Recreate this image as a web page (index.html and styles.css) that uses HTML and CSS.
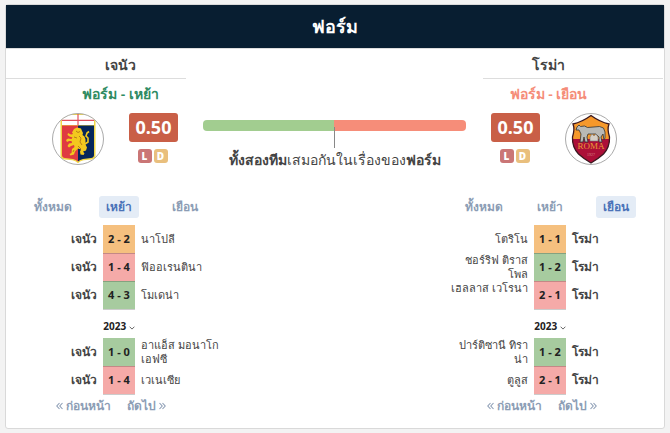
FILE: index.html
```html
<!doctype html>
<html lang="th">
  <head>
    <meta charset="utf-8">
    <title>ฟอร์ม</title>
    <link rel="stylesheet" href="styles.css">
  </head>
  <body>
	<svg class="defs" aria-hidden="true">
		<symbol id="chevron" viewBox="0 0 6 4"><path d="M.6 .7 3 3.1 5.4 .7" fill="none" stroke="currentColor"/></symbol>
		<symbol id="prev" viewBox="0 0 7 8"><path d="M3.5 1 .8 4l2.7 3M6.5 1 3.8 4l2.7 3" fill="none" stroke="currentColor" stroke-width="1.1"/></symbol>
		<symbol id="next" viewBox="0 0 7 8"><path d="M.5 1l2.7 3L.5 7M3.5 1l2.7 3-2.7 3" fill="none" stroke="currentColor" stroke-width="1.1"/></symbol>
	</svg>
	<main class="card">
		<h1>ฟอร์ม</h1>
		<section class="summary">
			<div class="team home">
				<h2>เจนัว</h2>
				<h3>ฟอร์ม - เหย้า</h3>
				<div class="rating">
					<svg class="crest" viewBox="0 0 52 52" role="img" aria-label="เจนัว">
						<clipPath id="round"><circle cx="26" cy="26" r="25.5"/></clipPath>
						<circle cx="26" cy="26" r="25.5" fill="#fff"/>
						<g clip-path="url(#round)">
							<path d="M8.500 0h35v43q0 3-4 3.500l-8 .8q-3 .5-5.500 3-2.500-2.500-5.500-3l-8-.8q-4-.5-4-3.500z" fill="#f0d647"/>
							<path d="M10 2h32v10H10z" fill="#fff"/>
							<path d="M10 6.800h32v1.200H10zM25.400 1h1.200v11h-1.200z" fill="#e2505c"/>
							<path d="M10 12.500h16v36q-2-2-5-2.500l-8-1q-3-.4-3-3z" fill="#df3a41"/>
							<path d="M26 12.500h16V42q0 2.600-3 3l-8 1q-3 .5-5 2.500z" fill="#06265a"/>
							<path d="M22 16l3-1.500 4 1 1 2.500 1 2-.5 2 2 1.500 1 3 0 5 1.500 3-1 3-3 1 1.500 2-1 1.500-3-.5-.5-3 1-2-3-1-3 3-1 3-3.500 1-1-1.500 2-1 .5-4 2.500-2-.5-2-3 1-2 1.500-1.500-1.500 1.500-2.500 3-.5-.5-2-2.500 0-2 1-1-2 2-1.500 3.500 .5 1-1.500-3-1-2-1.500 .5-2 3 1.500 2-.5-1-1.500z" fill="#f3c91e"/>
							<path d="M33 31l3-2 0-4-2-2 1-3 2-1.500" fill="none" stroke="#f3c91e" stroke-width="1.600"/>
							<path d="M24 18l2 1.500 2-1M27 23l2 2-1 4 2 3M22 24l3 1M26 33l3 3M22 37l-1 2" fill="none" stroke="#a86b18" stroke-width=".8"/>
						</g>
						<circle cx="26" cy="26" r="25.500" fill="none" stroke="#aaa"/>
					</svg>
					<div class="points">
						<strong>0.50</strong>
						<div class="results"><span class="lost">L</span><span class="drawn">D</span></div>
					</div>
				</div>
			</div>
			<div class="compare">
				<div class="bar"></div>
				<p><b>ทั้งสองทีม</b>เสมอกันในเรื่องของ<b>ฟอร์ม</b></p>
			</div>
			<div class="team away">
				<h2>โรม่า</h2>
				<h3>ฟอร์ม - เยือน</h3>
				<div class="rating">
					<div class="points">
						<strong>0.50</strong>
						<div class="results"><span class="lost">L</span><span class="drawn">D</span></div>
					</div>
					<svg class="crest" viewBox="0 0 52 52" role="img" aria-label="โรม่า">
						<circle cx="26" cy="26" r="25.500" fill="#fff" stroke="#aaa"/>
						<clipPath id="shield"><path d="M26 2.500q9 6.500 18 8.500-2 5 .5 13 .5 10-6 17Q33 46 26 50q-7-4-12.500-9-6.500-7-6-17Q10 16 8 11q9-2 18-8.500z"/></clipPath>
						<g clip-path="url(#shield)">
							<path d="M0 0h52v27H0z" fill="#f6982b"/>
							<path d="M0 26h52v26H0z" fill="#ac0f38"/>
						</g>
						<path d="M26 2.500q9 6.500 18 8.500-2 5 .5 13 .5 10-6 17Q33 46 26 50q-7-4-12.500-9-6.500-7-6-17Q10 16 8 11q9-2 18-8.500z" fill="none" stroke="#3b1820" stroke-width="1.300"/>
						<path d="M12 14l2-2 1.500 1.500 4-.5 3 1.500 12-1 4 1.500 1.500 4 0 6-1 2-1-6-2 3 1 5-3 0 0-5-3-3-8 0-1 3 1 5-3 0-1-5-1 5-3 0 1-8-2-4-3 0z" fill="#b9b9b6" stroke="#333" stroke-width=".8"/>
						<path d="M25 28l0-4 2-3 2 2 2-2 2 3 0 4z" fill="#d5cfc6" stroke="#777" stroke-width=".6"/>
						<text x="26" y="36" class="crest-name">ROMA</text>
						<text x="26" y="43" class="crest-year">1927</text>
					</svg>
				</div>
			</div>
		</section>
		<section class="history">
			<div class="matches">
				<nav class="tabs">
					<button type="button">ทั้งหมด</button>
					<button type="button" class="active">เหย้า</button>
					<button type="button">เยือน</button>
				</nav>
				<table>
					<tbody>
						<tr><td class="own">เจนัว</td><td class="score draw">2 - 2</td><td>นาโปลี</td></tr>
						<tr><td class="own">เจนัว</td><td class="score loss">1 - 4</td><td>ฟิออเรนตินา</td></tr>
						<tr><td class="own">เจนัว</td><td class="score win">4 - 3</td><td>โมเดน่า</td></tr>
					</tbody>
					<tbody>
						<tr><th colspan="3"><button type="button" class="season">2023 <svg class="chevron"><use href="#chevron"/></svg></button></th></tr>
						<tr><td class="own">เจนัว</td><td class="score win">1 - 0</td><td>อาแอ็ส มอนาโก เอฟซี</td></tr>
						<tr><td class="own">เจนัว</td><td class="score loss">1 - 4</td><td>เวเนเซีย</td></tr>
					</tbody>
				</table>
				<nav class="pager">
					<a href="#"><svg class="arrow"><use href="#prev"/></svg> ก่อนหน้า</a>
					<a href="#">ถัดไป <svg class="arrow"><use href="#next"/></svg></a>
				</nav>
			</div>
			<div class="matches">
				<nav class="tabs">
					<button type="button">ทั้งหมด</button>
					<button type="button">เหย้า</button>
					<button type="button" class="active">เยือน</button>
				</nav>
				<table>
					<tbody>
						<tr><td>โตริโน</td><td class="score draw">1 - 1</td><td class="own">โรม่า</td></tr>
						<tr><td>ชอร์ริฟ ติราส<wbr>โพล</td><td class="score win">1 - 2</td><td class="own">โรม่า</td></tr>
						<tr><td class="top">เฮลลาส เวโรนา</td><td class="score loss">2 - 1</td><td class="own">โรม่า</td></tr>
					</tbody>
					<tbody>
						<tr><th colspan="3"><button type="button" class="season">2023 <svg class="chevron"><use href="#chevron"/></svg></button></th></tr>
						<tr><td>ปาร์ติซานี ทิรา<wbr>น่า</td><td class="score win">1 - 2</td><td class="own">โรม่า</td></tr>
						<tr><td>ตูลูส</td><td class="score loss">2 - 1</td><td class="own">โรม่า</td></tr>
					</tbody>
				</table>
				<nav class="pager">
					<a href="#"><svg class="arrow"><use href="#prev"/></svg> ก่อนหน้า</a>
					<a href="#">ถัดไป <svg class="arrow"><use href="#next"/></svg></a>
				</nav>
			</div>
		</section>
	</main>
  </body>
</html>
```
FILE: styles.css
```css
* { box-sizing: border-box; }

body
{
	margin: 4px 5px;
	background: #f3f3f3;
	color: #444;
	font-family: "Noto Sans", "Open Sans", sans-serif;
	font-size: 12px;
}

h1, h2, h3, p { margin: 0; }

button
{
	border: 0;
	padding: 0;
	background: none;
	font-family: inherit;
	cursor: pointer;
}

.defs { display: none; }

.card
{
	background: #fff;
	border: 1px solid #d9d9d9;
	border-radius: 3px;
	padding-bottom: 11px;
}

h1
{
	background: #081e31;
	border-bottom: 1px solid #ddd;
	color: #fff;
	font-size: 18px;
	line-height: 43px;
	text-align: center;
}

/* team ratings and comparison bar */
.summary
{
	display: grid;
	grid-template-columns: 180px 1fr 180px;
	padding-right: 1px;
}

h2
{
	border-bottom: 1px solid #ddd;
	padding-top: 3px;
	font-size: 14px;
	font-weight: 600;
	line-height: 26px;
}

h3
{
	padding-bottom: 3px;
	font-size: 14px;
	font-weight: 600;
	line-height: 29px;
}

.team { text-align: center; }
.home h2, .home h3 { padding-left: 49px; }
.away h2, .away h3 { padding-right: 49px; }
.home h3 { color: #2e8b62; }
.away h3 { color: #f58d79; }

.rating
{
	display: flex;
	gap: 25px;
	padding-top: 2px;
}

.home .rating { padding-left: 46px; }
.away .rating { padding-left: 8px; }

.crest
{
	width: 52px;
	height: 52px;
}

.crest-name
{
	fill: #e99a35;
	font: 9px "Liberation Serif", serif;
	text-anchor: middle;
}

.crest-year
{
	fill: #d98a8a;
	font: 4px "Liberation Serif", serif;
	text-anchor: middle;
}

.points strong
{
	display: block;
	width: 49px;
	background: #c95f47;
	border-radius: 3px;
	color: #fff;
	font-size: 18px;
	line-height: 29px;
}

.results
{
	display: flex;
	justify-content: center;
	gap: 2px;
	margin-top: 7px;
	padding-right: 2px;
}

.results span
{
	width: 14px;
	border-radius: 3px;
	color: #fff;
	font-size: 10px;
	font-weight: 900;
	line-height: 14px;
}

.lost { background: #ca7676; }
.drawn { background: #e9bf7d; }

.compare
{
	padding: 71px 17px 0;
	text-align: center;
}

.bar
{
	height: 11px;
	border-radius: 4px;
	background: linear-gradient(to right, #a2cd90 50%, #f68d79 50%);
}

.compare p { font-size: 14px; line-height: 24px; }

.compare p::before
{
	content: "";
	display: block;
	width: 1px;
	height: 21px;
	margin: -4px auto 0;
	background: #888;
}

/* match history */
.history
{
	display: flex;
	justify-content: space-between;
	padding: 24px 11px 0 10px;
}

.matches { width: 206px; }

.tabs { display: flex; padding: 0 4px; }

.tabs button
{
	flex: 1;
	margin: 0 13px;
	border-radius: 3px;
	color: #8c9db5;
	font-size: 12px;
	font-weight: 600;
	line-height: 22px;
	white-space: nowrap;
	display: flex;
	justify-content: center;
}

.tabs .active { background: #e4ecf6; color: #4a72b8; }

table
{
	width: 100%;
	margin-top: 7px;
	border-collapse: collapse;
	table-layout: fixed;
}

td
{
	height: 28px;
	padding: 0 6px;
	font-size: 11px;
	line-height: 14px;
}

td:first-child { padding-left: 0; text-align: right; }
td:last-child { padding-right: 0; }
td.own { font-size: 12px; font-weight: 600; }
.top { vertical-align: top; }

td.score
{
	width: 32px;
	padding: 0;
	border-bottom: 1px solid #0003;
	color: #222;
	font-weight: 700;
	text-align: center;
}

.draw { background: #f5c07f; }
.win { background: #a7cb9f; }
.loss { background: #f5aaa8; }

th { height: 29px; padding: 5px 0 0; }

.season
{
	color: #222;
	font-size: 10px;
	font-weight: 700;
	line-height: 20px;
}

.chevron { width: 6px; height: 4px; color: #666; vertical-align: middle; }
.arrow { width: 7px; height: 8px; }

.pager
{
	display: flex;
	justify-content: center;
	gap: 15px;
	padding-right: 16px;
}

.pager a
{
	color: #8c9db5;
	font-size: 12px;
	font-weight: 600;
	line-height: 22px;
	text-decoration: none;
}
```
